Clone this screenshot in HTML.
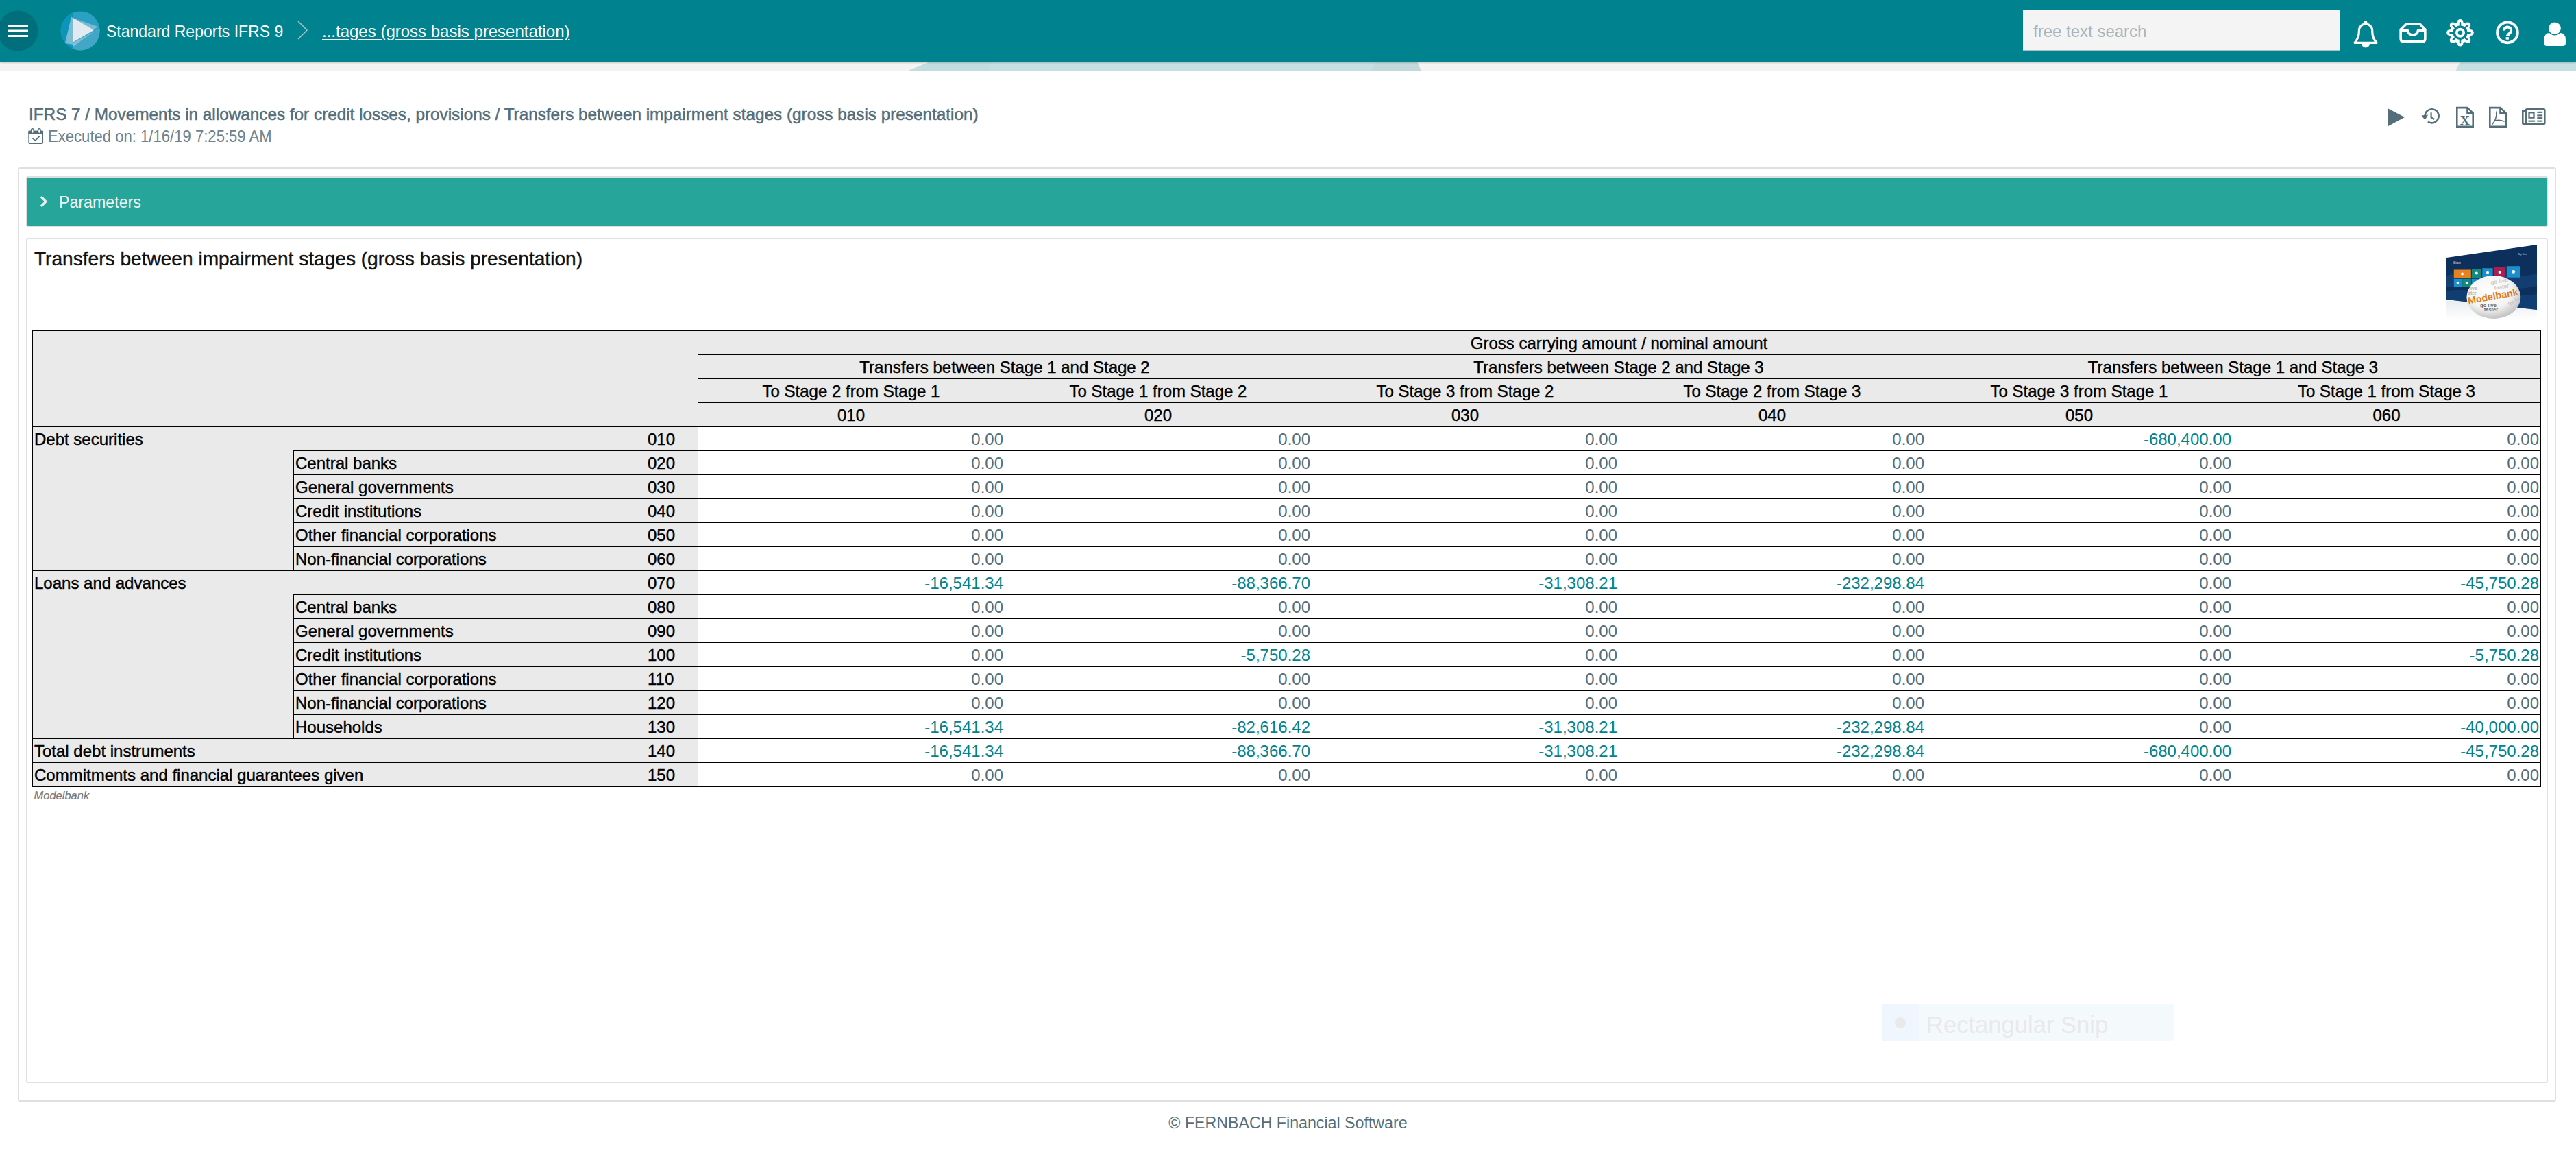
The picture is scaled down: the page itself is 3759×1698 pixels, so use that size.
<!DOCTYPE html>
<html><head><meta charset="utf-8"><title>Standard Reports IFRS 9</title>
<style>
html,body{margin:0;padding:0;width:3759px;height:1698px;overflow:hidden;background:#fff;position:relative}
body{font-family:"Liberation Sans", sans-serif}
.t{position:absolute;white-space:nowrap}
.c{position:absolute;box-sizing:border-box;border-left:1px solid #000;border-top:1px solid #000}
.nl{border-left:none}
</style></head><body>
<div style="position:absolute;left:0;top:90px;width:3759px;height:14px;background:#f3f3f3"></div><svg style="position:absolute;left:0;top:90px" width="3759" height="14">
<polygon points="1323,14 1358,0 2040,0 2074,14" fill="#c5dfe2"/>
<polygon points="1323,14 1358,0 1445,0 1445,14" fill="#c3dcdf"/>
<polygon points="2000,14 2008,0 2068,0 2074,14" fill="#c2d8da"/>
<polygon points="3583,14 3590,0 3759,0 3759,14" fill="#c5dfe2"/>
</svg><div style="position:absolute;left:0;top:0;width:3759px;height:90px;background:#00838f;box-shadow:0 1px 3px rgba(0,0,0,0.32)"></div><svg style="position:absolute;left:0;top:0" width="70" height="90">
<circle cx="26" cy="45" r="29.5" fill="#006f7b"/>
<rect x="11" y="36" width="30" height="3" fill="#fff"/>
<rect x="11" y="43.5" width="30" height="3" fill="#fff"/>
<rect x="11" y="51" width="30" height="3" fill="#fff"/>
</svg><svg style="position:absolute;left:80px;top:10px" width="70" height="70" viewBox="0 0 70 70">
<defs><clipPath id="lc"><circle cx="37.1" cy="34.9" r="28.5"/></clipPath></defs>
<g clip-path="url(#lc)">
<rect x="0" y="0" width="70" height="70" fill="#2aa0c3"/>
<polygon points="0,0 26.8,0 26.8,70 0,70" fill="#0b95bb"/>
<polygon points="26.8,52 70,28 70,70 26.8,70" fill="#42a6c6"/>
<polygon points="24,14.4 26.8,16.2 26.8,55 15,53" fill="#7cbcd3"/>
<polygon points="26.8,16.2 63.1,28.9 57,33 37,28" fill="#79b9d1"/>
<polygon points="26.8,52.3 57,36 40,48 26.8,58" fill="#86bfd4"/>
</g>
<polygon points="26.8,16.2 57.1,34 26.8,51.4" fill="#e1eaf0"/>
</svg><div class="t" style="left:155px;top:34.83px;font-size:23px;line-height:23px;color:#fff;font-weight:normal;">Standard Reports IFRS 9</div>
<svg style="position:absolute;left:433px;top:30px" width="18" height="28"><polyline points="2,1 15,14 2,27" fill="none" stroke="#a9c4c8" stroke-width="1.5"/></svg><div class="t" style="left:470px;top:33.98px;font-size:24px;line-height:24px;color:#fff;font-weight:normal;text-decoration:underline;text-underline-offset:3px;text-decoration-thickness:2px;">...tages (gross basis presentation)</div>
<div style="position:absolute;left:2952px;top:15px;width:463px;height:58px;background:#f4f4f4;border-bottom:2px solid #b0bec5"></div><div class="t" style="left:2967px;top:33.68px;font-size:24px;line-height:24px;color:#aab4ba;font-weight:normal;">free text search</div>
<svg style="position:absolute;left:3425px;top:20px" width="334" height="60" viewBox="0 0 334 60">
<g fill="none" stroke="#fff" stroke-width="3.2" stroke-linejoin="round">
<path d="M11,42.3 L43.1,42.3 C38.5,37.5 36.75,32 36.75,26 L36.75,24.7 A9.7,9.7 0 0 0 17.35,24.7 L17.35,26 C17.35,32 15.5,37.5 11,42.3 Z"/>
<path d="M86.5,14.85 L105.8,14.85 L113.85,23 L113.85,36.7 Q113.85,40.7 109.85,40.7 L82.15,40.7 Q78.15,40.7 78.15,36.7 L78.15,23 Z" stroke-width="3.6"/>
<path d="M78.15,24.5 L88.4,24.5 A7.5,6.5 0 0 0 103.4,24.5 L113.85,24.5" stroke-width="3.6"/>
<circle cx="233.95" cy="27.4" r="14.9" stroke-width="3.8"/>
<path d="M229.1,24.6 A5,5 0 1 1 237.6,28 L235,30.6 Q233.8,31.7 233.8,33" stroke-width="4" stroke-linejoin="miter"/>
</g>
<circle cx="27" cy="12.2" r="2.3" fill="#fff"/>
<path d="M21.2,43.5 A5.9,5.9 0 0 0 33,43.5 Z" fill="#fff"/>
<rect x="231.7" y="34.1" width="4.2" height="3.6" fill="#fff"/>
<circle cx="165" cy="27.7" r="15.2" fill="#fff"/>
<circle cx="165.00" cy="12.30" r="4.4" fill="#fff"/><circle cx="175.89" cy="16.81" r="4.4" fill="#fff"/><circle cx="180.40" cy="27.70" r="4.4" fill="#fff"/><circle cx="175.89" cy="38.59" r="4.4" fill="#fff"/><circle cx="165.00" cy="43.10" r="4.4" fill="#fff"/><circle cx="154.11" cy="38.59" r="4.4" fill="#fff"/><circle cx="149.60" cy="27.70" r="4.4" fill="#fff"/><circle cx="154.11" cy="16.81" r="4.4" fill="#fff"/>
<circle cx="165" cy="27.7" r="10.5" fill="#00838f"/>
<rect x="163.75" y="11.90" width="2.5" height="7" rx="1.25" fill="#00838f" transform="rotate(0 165 27.7)"/><rect x="163.75" y="11.90" width="2.5" height="7" rx="1.25" fill="#00838f" transform="rotate(45 165 27.7)"/><rect x="163.75" y="11.90" width="2.5" height="7" rx="1.25" fill="#00838f" transform="rotate(90 165 27.7)"/><rect x="163.75" y="11.90" width="2.5" height="7" rx="1.25" fill="#00838f" transform="rotate(135 165 27.7)"/><rect x="163.75" y="11.90" width="2.5" height="7" rx="1.25" fill="#00838f" transform="rotate(180 165 27.7)"/><rect x="163.75" y="11.90" width="2.5" height="7" rx="1.25" fill="#00838f" transform="rotate(225 165 27.7)"/><rect x="163.75" y="11.90" width="2.5" height="7" rx="1.25" fill="#00838f" transform="rotate(270 165 27.7)"/><rect x="163.75" y="11.90" width="2.5" height="7" rx="1.25" fill="#00838f" transform="rotate(315 165 27.7)"/>
<circle cx="165" cy="27.7" r="5.15" fill="none" stroke="#fff" stroke-width="3.7"/>
<path d="M287.4,43 L287.4,38 Q287.4,28.1 296,28.1 L310.3,28.1 Q318.9,28.1 318.9,38 L318.9,43 Q318.9,47.1 314.8,47.1 L291.5,47.1 Q287.4,47.1 287.4,43 Z" fill="#fff"/>
<circle cx="303" cy="21.3" r="10.3" fill="#00838f"/>
<circle cx="303" cy="21.3" r="8.8" fill="#fff"/>
</svg><div class="t" style="left:42px;top:154.73px;font-size:24.3px;line-height:24.3px;color:#546e7a;font-weight:normal;-webkit-text-stroke:0.55px #546e7a;">IFRS 7 / Movements in allowances for credit losses, provisions / Transfers between impairment stages (gross basis presentation)</div>
<svg style="position:absolute;left:36px;top:182px" width="34" height="34" viewBox="0 0 34 34">
<rect x="6.2" y="9.5" width="20" height="17.7" rx="1.2" fill="none" stroke="#546e7a" stroke-width="1.7"/>
<rect x="5.4" y="8.7" width="21.6" height="4.7" fill="#546e7a"/>
<rect x="9.6" y="5.8" width="3.6" height="6.8" rx="1.8" fill="#fff" stroke="#546e7a" stroke-width="1.5"/>
<rect x="19.5" y="5.8" width="3.6" height="6.8" rx="1.8" fill="#fff" stroke="#546e7a" stroke-width="1.5"/>
<polyline points="11.5,19.6 15.4,23.1 21.7,16.7" fill="none" stroke="#546e7a" stroke-width="1.8"/>
</svg><div class="t" style="left:70px;top:188.31px;font-size:23.5px;line-height:23.5px;color:#6d828c;font-weight:normal;transform:scaleX(0.94);transform-origin:0 0;">Executed on: 1/16/19 7:25:59 AM</div>
<svg style="position:absolute;left:3480px;top:150px" width="240" height="40" viewBox="0 0 240 40">
<polygon points="5,8.4 29,21 5,34.1" fill="#546e7a"/>
<g fill="none" stroke="#546e7a" stroke-width="2.6">
<path d="M58.6,19.3 A10,10 0 1 1 62.9,27.5"/>
<polyline points="67.6,14.3 67.6,21.2 72.1,24" stroke-width="2.2"/>
<path d="M105.3,7.1 L120.5,7.1 L128.7,15 L128.7,34.7 L105.3,34.7 Z"/>
<polyline points="120.5,7.1 120.5,15 128.7,15"/>
<path d="M153.3,7.1 L168.5,7.1 L176.7,15 L176.7,34.7 L153.3,34.7 Z"/>
<polyline points="168.5,7.1 168.5,15 176.7,15"/>
<rect x="206" y="9.3" width="27.3" height="21.7" rx="1.5"/>
<path d="M206,11.8 L201.3,11.8 L201.3,29.5 Q201.3,31 202.8,31 L206,31"/>
<rect x="210.5" y="14.3" width="7" height="7.3" stroke-width="2.3"/>
</g>
<polygon points="53.4,18.6 63.2,17.6 58.6,25" fill="#546e7a"/>
<text x="116.9" y="32.2" font-family="Liberation Serif" font-weight="bold" font-size="19.5" fill="#546e7a" text-anchor="middle">X</text>
<path d="M156.8,31.5 C160,28 163.5,21 162.8,12.5 M159.5,26.5 C163,25 170,24.5 174.5,27.5 M160.5,26 C162.5,21 164,17 162.8,12.5" fill="none" stroke="#546e7a" stroke-width="1.5"/>
<rect x="222.3" y="12.8" width="7.9" height="2.1" fill="#546e7a"/><rect x="222.3" y="17.3" width="7.9" height="2.1" fill="#546e7a"/>
<rect x="222.3" y="21.1" width="7.9" height="2.1" fill="#546e7a"/>
<rect x="209.4" y="25.6" width="9.7" height="2.1" fill="#546e7a"/><rect x="222.3" y="25.6" width="7.9" height="2.1" fill="#546e7a"/>
</svg><div style="position:absolute;left:26px;top:244px;width:3700px;height:1359px;border:2px solid #e0e0e0;border-radius:3px"></div><div style="position:absolute;left:38px;top:257px;width:3676px;height:70px;border:2px solid #dedede;border-radius:3px;background:#26a69a"></div><svg style="position:absolute;left:56px;top:284px" width="16" height="20"><polyline points="4,3 11,10 4,17" fill="none" stroke="#eceff1" stroke-width="3.2"/></svg><div class="t" style="left:86px;top:284.36px;font-size:23.2px;line-height:23.2px;color:#eef3f3;font-weight:normal;">Parameters</div>
<div style="position:absolute;left:38px;top:347px;width:3676px;height:1229px;border:2px solid #e0e0e0;border-radius:3px"></div><div class="t" style="left:50px;top:364.21px;font-size:28.1px;line-height:28.1px;color:#111;font-weight:normal;-webkit-text-stroke:0.45px #111;">Transfers between impairment stages (gross basis presentation)</div>
<div style="position:absolute;left:0;top:0"><div class="c" style="left:47px;top:482px;width:971px;height:140px;background:#eaeaea"></div>
<div class="c" style="left:1018px;top:482px;width:2689px;height:35px;background:#eaeaea"></div>
<div class="c" style="left:1018px;top:517px;width:896px;height:35px;background:#eaeaea"></div>
<div class="c" style="left:1914px;top:517px;width:896px;height:35px;background:#eaeaea"></div>
<div class="c" style="left:2810px;top:517px;width:897px;height:35px;background:#eaeaea"></div>
<div class="c" style="left:1018px;top:552px;width:448px;height:35px;background:#eaeaea"></div>
<div class="c" style="left:1018px;top:587px;width:448px;height:35px;background:#eaeaea"></div>
<div class="c" style="left:1466px;top:552px;width:448px;height:35px;background:#eaeaea"></div>
<div class="c" style="left:1466px;top:587px;width:448px;height:35px;background:#eaeaea"></div>
<div class="c" style="left:1914px;top:552px;width:448px;height:35px;background:#eaeaea"></div>
<div class="c" style="left:1914px;top:587px;width:448px;height:35px;background:#eaeaea"></div>
<div class="c" style="left:2362px;top:552px;width:448px;height:35px;background:#eaeaea"></div>
<div class="c" style="left:2362px;top:587px;width:448px;height:35px;background:#eaeaea"></div>
<div class="c" style="left:2810px;top:552px;width:448px;height:35px;background:#eaeaea"></div>
<div class="c" style="left:2810px;top:587px;width:448px;height:35px;background:#eaeaea"></div>
<div class="c" style="left:3258px;top:552px;width:449px;height:35px;background:#eaeaea"></div>
<div class="c" style="left:3258px;top:587px;width:449px;height:35px;background:#eaeaea"></div>
<div class="c" style="left:47px;top:622px;width:381px;height:210px;background:#eaeaea"></div>
<div class="c" style="left:47px;top:832px;width:381px;height:245px;background:#eaeaea"></div>
<div class="c nl" style="left:428px;top:622px;width:514px;height:35px;background:#eaeaea"></div>
<div class="c" style="left:942px;top:622px;width:76px;height:35px;background:#eaeaea"></div>
<div class="c" style="left:1018px;top:622px;width:448px;height:35px;background:#fff"></div>
<div class="c" style="left:1466px;top:622px;width:448px;height:35px;background:#fff"></div>
<div class="c" style="left:1914px;top:622px;width:448px;height:35px;background:#fff"></div>
<div class="c" style="left:2362px;top:622px;width:448px;height:35px;background:#fff"></div>
<div class="c" style="left:2810px;top:622px;width:448px;height:35px;background:#fff"></div>
<div class="c" style="left:3258px;top:622px;width:449px;height:35px;background:#fff"></div>
<div class="c" style="left:428px;top:657px;width:514px;height:35px;background:#eaeaea"></div>
<div class="c" style="left:942px;top:657px;width:76px;height:35px;background:#eaeaea"></div>
<div class="c" style="left:1018px;top:657px;width:448px;height:35px;background:#fff"></div>
<div class="c" style="left:1466px;top:657px;width:448px;height:35px;background:#fff"></div>
<div class="c" style="left:1914px;top:657px;width:448px;height:35px;background:#fff"></div>
<div class="c" style="left:2362px;top:657px;width:448px;height:35px;background:#fff"></div>
<div class="c" style="left:2810px;top:657px;width:448px;height:35px;background:#fff"></div>
<div class="c" style="left:3258px;top:657px;width:449px;height:35px;background:#fff"></div>
<div class="c" style="left:428px;top:692px;width:514px;height:35px;background:#eaeaea"></div>
<div class="c" style="left:942px;top:692px;width:76px;height:35px;background:#eaeaea"></div>
<div class="c" style="left:1018px;top:692px;width:448px;height:35px;background:#fff"></div>
<div class="c" style="left:1466px;top:692px;width:448px;height:35px;background:#fff"></div>
<div class="c" style="left:1914px;top:692px;width:448px;height:35px;background:#fff"></div>
<div class="c" style="left:2362px;top:692px;width:448px;height:35px;background:#fff"></div>
<div class="c" style="left:2810px;top:692px;width:448px;height:35px;background:#fff"></div>
<div class="c" style="left:3258px;top:692px;width:449px;height:35px;background:#fff"></div>
<div class="c" style="left:428px;top:727px;width:514px;height:35px;background:#eaeaea"></div>
<div class="c" style="left:942px;top:727px;width:76px;height:35px;background:#eaeaea"></div>
<div class="c" style="left:1018px;top:727px;width:448px;height:35px;background:#fff"></div>
<div class="c" style="left:1466px;top:727px;width:448px;height:35px;background:#fff"></div>
<div class="c" style="left:1914px;top:727px;width:448px;height:35px;background:#fff"></div>
<div class="c" style="left:2362px;top:727px;width:448px;height:35px;background:#fff"></div>
<div class="c" style="left:2810px;top:727px;width:448px;height:35px;background:#fff"></div>
<div class="c" style="left:3258px;top:727px;width:449px;height:35px;background:#fff"></div>
<div class="c" style="left:428px;top:762px;width:514px;height:35px;background:#eaeaea"></div>
<div class="c" style="left:942px;top:762px;width:76px;height:35px;background:#eaeaea"></div>
<div class="c" style="left:1018px;top:762px;width:448px;height:35px;background:#fff"></div>
<div class="c" style="left:1466px;top:762px;width:448px;height:35px;background:#fff"></div>
<div class="c" style="left:1914px;top:762px;width:448px;height:35px;background:#fff"></div>
<div class="c" style="left:2362px;top:762px;width:448px;height:35px;background:#fff"></div>
<div class="c" style="left:2810px;top:762px;width:448px;height:35px;background:#fff"></div>
<div class="c" style="left:3258px;top:762px;width:449px;height:35px;background:#fff"></div>
<div class="c" style="left:428px;top:797px;width:514px;height:35px;background:#eaeaea"></div>
<div class="c" style="left:942px;top:797px;width:76px;height:35px;background:#eaeaea"></div>
<div class="c" style="left:1018px;top:797px;width:448px;height:35px;background:#fff"></div>
<div class="c" style="left:1466px;top:797px;width:448px;height:35px;background:#fff"></div>
<div class="c" style="left:1914px;top:797px;width:448px;height:35px;background:#fff"></div>
<div class="c" style="left:2362px;top:797px;width:448px;height:35px;background:#fff"></div>
<div class="c" style="left:2810px;top:797px;width:448px;height:35px;background:#fff"></div>
<div class="c" style="left:3258px;top:797px;width:449px;height:35px;background:#fff"></div>
<div class="c nl" style="left:428px;top:832px;width:514px;height:35px;background:#eaeaea"></div>
<div class="c" style="left:942px;top:832px;width:76px;height:35px;background:#eaeaea"></div>
<div class="c" style="left:1018px;top:832px;width:448px;height:35px;background:#fff"></div>
<div class="c" style="left:1466px;top:832px;width:448px;height:35px;background:#fff"></div>
<div class="c" style="left:1914px;top:832px;width:448px;height:35px;background:#fff"></div>
<div class="c" style="left:2362px;top:832px;width:448px;height:35px;background:#fff"></div>
<div class="c" style="left:2810px;top:832px;width:448px;height:35px;background:#fff"></div>
<div class="c" style="left:3258px;top:832px;width:449px;height:35px;background:#fff"></div>
<div class="c" style="left:428px;top:867px;width:514px;height:35px;background:#eaeaea"></div>
<div class="c" style="left:942px;top:867px;width:76px;height:35px;background:#eaeaea"></div>
<div class="c" style="left:1018px;top:867px;width:448px;height:35px;background:#fff"></div>
<div class="c" style="left:1466px;top:867px;width:448px;height:35px;background:#fff"></div>
<div class="c" style="left:1914px;top:867px;width:448px;height:35px;background:#fff"></div>
<div class="c" style="left:2362px;top:867px;width:448px;height:35px;background:#fff"></div>
<div class="c" style="left:2810px;top:867px;width:448px;height:35px;background:#fff"></div>
<div class="c" style="left:3258px;top:867px;width:449px;height:35px;background:#fff"></div>
<div class="c" style="left:428px;top:902px;width:514px;height:35px;background:#eaeaea"></div>
<div class="c" style="left:942px;top:902px;width:76px;height:35px;background:#eaeaea"></div>
<div class="c" style="left:1018px;top:902px;width:448px;height:35px;background:#fff"></div>
<div class="c" style="left:1466px;top:902px;width:448px;height:35px;background:#fff"></div>
<div class="c" style="left:1914px;top:902px;width:448px;height:35px;background:#fff"></div>
<div class="c" style="left:2362px;top:902px;width:448px;height:35px;background:#fff"></div>
<div class="c" style="left:2810px;top:902px;width:448px;height:35px;background:#fff"></div>
<div class="c" style="left:3258px;top:902px;width:449px;height:35px;background:#fff"></div>
<div class="c" style="left:428px;top:937px;width:514px;height:35px;background:#eaeaea"></div>
<div class="c" style="left:942px;top:937px;width:76px;height:35px;background:#eaeaea"></div>
<div class="c" style="left:1018px;top:937px;width:448px;height:35px;background:#fff"></div>
<div class="c" style="left:1466px;top:937px;width:448px;height:35px;background:#fff"></div>
<div class="c" style="left:1914px;top:937px;width:448px;height:35px;background:#fff"></div>
<div class="c" style="left:2362px;top:937px;width:448px;height:35px;background:#fff"></div>
<div class="c" style="left:2810px;top:937px;width:448px;height:35px;background:#fff"></div>
<div class="c" style="left:3258px;top:937px;width:449px;height:35px;background:#fff"></div>
<div class="c" style="left:428px;top:972px;width:514px;height:35px;background:#eaeaea"></div>
<div class="c" style="left:942px;top:972px;width:76px;height:35px;background:#eaeaea"></div>
<div class="c" style="left:1018px;top:972px;width:448px;height:35px;background:#fff"></div>
<div class="c" style="left:1466px;top:972px;width:448px;height:35px;background:#fff"></div>
<div class="c" style="left:1914px;top:972px;width:448px;height:35px;background:#fff"></div>
<div class="c" style="left:2362px;top:972px;width:448px;height:35px;background:#fff"></div>
<div class="c" style="left:2810px;top:972px;width:448px;height:35px;background:#fff"></div>
<div class="c" style="left:3258px;top:972px;width:449px;height:35px;background:#fff"></div>
<div class="c" style="left:428px;top:1007px;width:514px;height:35px;background:#eaeaea"></div>
<div class="c" style="left:942px;top:1007px;width:76px;height:35px;background:#eaeaea"></div>
<div class="c" style="left:1018px;top:1007px;width:448px;height:35px;background:#fff"></div>
<div class="c" style="left:1466px;top:1007px;width:448px;height:35px;background:#fff"></div>
<div class="c" style="left:1914px;top:1007px;width:448px;height:35px;background:#fff"></div>
<div class="c" style="left:2362px;top:1007px;width:448px;height:35px;background:#fff"></div>
<div class="c" style="left:2810px;top:1007px;width:448px;height:35px;background:#fff"></div>
<div class="c" style="left:3258px;top:1007px;width:449px;height:35px;background:#fff"></div>
<div class="c" style="left:428px;top:1042px;width:514px;height:35px;background:#eaeaea"></div>
<div class="c" style="left:942px;top:1042px;width:76px;height:35px;background:#eaeaea"></div>
<div class="c" style="left:1018px;top:1042px;width:448px;height:35px;background:#fff"></div>
<div class="c" style="left:1466px;top:1042px;width:448px;height:35px;background:#fff"></div>
<div class="c" style="left:1914px;top:1042px;width:448px;height:35px;background:#fff"></div>
<div class="c" style="left:2362px;top:1042px;width:448px;height:35px;background:#fff"></div>
<div class="c" style="left:2810px;top:1042px;width:448px;height:35px;background:#fff"></div>
<div class="c" style="left:3258px;top:1042px;width:449px;height:35px;background:#fff"></div>
<div class="c" style="left:47px;top:1077px;width:895px;height:35px;background:#eaeaea"></div>
<div class="c" style="left:942px;top:1077px;width:76px;height:35px;background:#eaeaea"></div>
<div class="c" style="left:1018px;top:1077px;width:448px;height:35px;background:#fff"></div>
<div class="c" style="left:1466px;top:1077px;width:448px;height:35px;background:#fff"></div>
<div class="c" style="left:1914px;top:1077px;width:448px;height:35px;background:#fff"></div>
<div class="c" style="left:2362px;top:1077px;width:448px;height:35px;background:#fff"></div>
<div class="c" style="left:2810px;top:1077px;width:448px;height:35px;background:#fff"></div>
<div class="c" style="left:3258px;top:1077px;width:449px;height:35px;background:#fff"></div>
<div class="c" style="left:47px;top:1112px;width:895px;height:35px;background:#eaeaea"></div>
<div class="c" style="left:942px;top:1112px;width:76px;height:35px;background:#eaeaea"></div>
<div class="c" style="left:1018px;top:1112px;width:448px;height:35px;background:#fff"></div>
<div class="c" style="left:1466px;top:1112px;width:448px;height:35px;background:#fff"></div>
<div class="c" style="left:1914px;top:1112px;width:448px;height:35px;background:#fff"></div>
<div class="c" style="left:2362px;top:1112px;width:448px;height:35px;background:#fff"></div>
<div class="c" style="left:2810px;top:1112px;width:448px;height:35px;background:#fff"></div>
<div class="c" style="left:3258px;top:1112px;width:449px;height:35px;background:#fff"></div>
</div><div style="position:absolute;left:47px;top:482px;width:3660px;height:665px;border-right:1px solid #000;border-bottom:1px solid #000"></div><div class="t" style="left:1362.5px;width:2000px;text-align:center;top:488.98px;font-size:24px;line-height:24px;color:#000;font-weight:normal;-webkit-text-stroke:0.45px #000;">Gross carrying amount / nominal amount</div>
<div class="t" style="left:466.0px;width:2000px;text-align:center;top:523.98px;font-size:24px;line-height:24px;color:#000;font-weight:normal;-webkit-text-stroke:0.45px #000;">Transfers between Stage 1 and Stage 2</div>
<div class="t" style="left:1362.0px;width:2000px;text-align:center;top:523.98px;font-size:24px;line-height:24px;color:#000;font-weight:normal;-webkit-text-stroke:0.45px #000;">Transfers between Stage 2 and Stage 3</div>
<div class="t" style="left:2258.5px;width:2000px;text-align:center;top:523.98px;font-size:24px;line-height:24px;color:#000;font-weight:normal;-webkit-text-stroke:0.45px #000;">Transfers between Stage 1 and Stage 3</div>
<div class="t" style="left:242.0px;width:2000px;text-align:center;top:558.98px;font-size:24px;line-height:24px;color:#000;font-weight:normal;-webkit-text-stroke:0.45px #000;">To Stage 2 from Stage 1</div>
<div class="t" style="left:242.0px;width:2000px;text-align:center;top:593.98px;font-size:24px;line-height:24px;color:#000;font-weight:normal;-webkit-text-stroke:0.45px #000;">010</div>
<div class="t" style="left:690.0px;width:2000px;text-align:center;top:558.98px;font-size:24px;line-height:24px;color:#000;font-weight:normal;-webkit-text-stroke:0.45px #000;">To Stage 1 from Stage 2</div>
<div class="t" style="left:690.0px;width:2000px;text-align:center;top:593.98px;font-size:24px;line-height:24px;color:#000;font-weight:normal;-webkit-text-stroke:0.45px #000;">020</div>
<div class="t" style="left:1138.0px;width:2000px;text-align:center;top:558.98px;font-size:24px;line-height:24px;color:#000;font-weight:normal;-webkit-text-stroke:0.45px #000;">To Stage 3 from Stage 2</div>
<div class="t" style="left:1138.0px;width:2000px;text-align:center;top:593.98px;font-size:24px;line-height:24px;color:#000;font-weight:normal;-webkit-text-stroke:0.45px #000;">030</div>
<div class="t" style="left:1586.0px;width:2000px;text-align:center;top:558.98px;font-size:24px;line-height:24px;color:#000;font-weight:normal;-webkit-text-stroke:0.45px #000;">To Stage 2 from Stage 3</div>
<div class="t" style="left:1586.0px;width:2000px;text-align:center;top:593.98px;font-size:24px;line-height:24px;color:#000;font-weight:normal;-webkit-text-stroke:0.45px #000;">040</div>
<div class="t" style="left:2034.0px;width:2000px;text-align:center;top:558.98px;font-size:24px;line-height:24px;color:#000;font-weight:normal;-webkit-text-stroke:0.45px #000;">To Stage 3 from Stage 1</div>
<div class="t" style="left:2034.0px;width:2000px;text-align:center;top:593.98px;font-size:24px;line-height:24px;color:#000;font-weight:normal;-webkit-text-stroke:0.45px #000;">050</div>
<div class="t" style="left:2482.5px;width:2000px;text-align:center;top:558.98px;font-size:24px;line-height:24px;color:#000;font-weight:normal;-webkit-text-stroke:0.45px #000;">To Stage 1 from Stage 3</div>
<div class="t" style="left:2482.5px;width:2000px;text-align:center;top:593.98px;font-size:24px;line-height:24px;color:#000;font-weight:normal;-webkit-text-stroke:0.45px #000;">060</div>
<div class="t" style="left:50px;top:628.98px;font-size:24px;line-height:24px;color:#000;font-weight:normal;-webkit-text-stroke:0.45px #000;">Debt securities</div>
<div class="t" style="left:945px;top:628.98px;font-size:24px;line-height:24px;color:#000;font-weight:normal;-webkit-text-stroke:0.45px #000;">010</div>
<div class="t" style="right:2295px;top:628.98px;font-size:24px;line-height:24px;color:#546e7a;font-weight:normal;">0.00</div>
<div class="t" style="right:1847px;top:628.98px;font-size:24px;line-height:24px;color:#546e7a;font-weight:normal;">0.00</div>
<div class="t" style="right:1399px;top:628.98px;font-size:24px;line-height:24px;color:#546e7a;font-weight:normal;">0.00</div>
<div class="t" style="right:951px;top:628.98px;font-size:24px;line-height:24px;color:#546e7a;font-weight:normal;">0.00</div>
<div class="t" style="right:503px;top:628.98px;font-size:24px;line-height:24px;color:#00838f;font-weight:normal;">-680,400.00</div>
<div class="t" style="right:54px;top:628.98px;font-size:24px;line-height:24px;color:#546e7a;font-weight:normal;">0.00</div>
<div class="t" style="left:431px;top:663.98px;font-size:24px;line-height:24px;color:#000;font-weight:normal;-webkit-text-stroke:0.45px #000;">Central banks</div>
<div class="t" style="left:945px;top:663.98px;font-size:24px;line-height:24px;color:#000;font-weight:normal;-webkit-text-stroke:0.45px #000;">020</div>
<div class="t" style="right:2295px;top:663.98px;font-size:24px;line-height:24px;color:#546e7a;font-weight:normal;">0.00</div>
<div class="t" style="right:1847px;top:663.98px;font-size:24px;line-height:24px;color:#546e7a;font-weight:normal;">0.00</div>
<div class="t" style="right:1399px;top:663.98px;font-size:24px;line-height:24px;color:#546e7a;font-weight:normal;">0.00</div>
<div class="t" style="right:951px;top:663.98px;font-size:24px;line-height:24px;color:#546e7a;font-weight:normal;">0.00</div>
<div class="t" style="right:503px;top:663.98px;font-size:24px;line-height:24px;color:#546e7a;font-weight:normal;">0.00</div>
<div class="t" style="right:54px;top:663.98px;font-size:24px;line-height:24px;color:#546e7a;font-weight:normal;">0.00</div>
<div class="t" style="left:431px;top:698.98px;font-size:24px;line-height:24px;color:#000;font-weight:normal;-webkit-text-stroke:0.45px #000;">General governments</div>
<div class="t" style="left:945px;top:698.98px;font-size:24px;line-height:24px;color:#000;font-weight:normal;-webkit-text-stroke:0.45px #000;">030</div>
<div class="t" style="right:2295px;top:698.98px;font-size:24px;line-height:24px;color:#546e7a;font-weight:normal;">0.00</div>
<div class="t" style="right:1847px;top:698.98px;font-size:24px;line-height:24px;color:#546e7a;font-weight:normal;">0.00</div>
<div class="t" style="right:1399px;top:698.98px;font-size:24px;line-height:24px;color:#546e7a;font-weight:normal;">0.00</div>
<div class="t" style="right:951px;top:698.98px;font-size:24px;line-height:24px;color:#546e7a;font-weight:normal;">0.00</div>
<div class="t" style="right:503px;top:698.98px;font-size:24px;line-height:24px;color:#546e7a;font-weight:normal;">0.00</div>
<div class="t" style="right:54px;top:698.98px;font-size:24px;line-height:24px;color:#546e7a;font-weight:normal;">0.00</div>
<div class="t" style="left:431px;top:733.98px;font-size:24px;line-height:24px;color:#000;font-weight:normal;-webkit-text-stroke:0.45px #000;">Credit institutions</div>
<div class="t" style="left:945px;top:733.98px;font-size:24px;line-height:24px;color:#000;font-weight:normal;-webkit-text-stroke:0.45px #000;">040</div>
<div class="t" style="right:2295px;top:733.98px;font-size:24px;line-height:24px;color:#546e7a;font-weight:normal;">0.00</div>
<div class="t" style="right:1847px;top:733.98px;font-size:24px;line-height:24px;color:#546e7a;font-weight:normal;">0.00</div>
<div class="t" style="right:1399px;top:733.98px;font-size:24px;line-height:24px;color:#546e7a;font-weight:normal;">0.00</div>
<div class="t" style="right:951px;top:733.98px;font-size:24px;line-height:24px;color:#546e7a;font-weight:normal;">0.00</div>
<div class="t" style="right:503px;top:733.98px;font-size:24px;line-height:24px;color:#546e7a;font-weight:normal;">0.00</div>
<div class="t" style="right:54px;top:733.98px;font-size:24px;line-height:24px;color:#546e7a;font-weight:normal;">0.00</div>
<div class="t" style="left:431px;top:768.98px;font-size:24px;line-height:24px;color:#000;font-weight:normal;-webkit-text-stroke:0.45px #000;">Other financial corporations</div>
<div class="t" style="left:945px;top:768.98px;font-size:24px;line-height:24px;color:#000;font-weight:normal;-webkit-text-stroke:0.45px #000;">050</div>
<div class="t" style="right:2295px;top:768.98px;font-size:24px;line-height:24px;color:#546e7a;font-weight:normal;">0.00</div>
<div class="t" style="right:1847px;top:768.98px;font-size:24px;line-height:24px;color:#546e7a;font-weight:normal;">0.00</div>
<div class="t" style="right:1399px;top:768.98px;font-size:24px;line-height:24px;color:#546e7a;font-weight:normal;">0.00</div>
<div class="t" style="right:951px;top:768.98px;font-size:24px;line-height:24px;color:#546e7a;font-weight:normal;">0.00</div>
<div class="t" style="right:503px;top:768.98px;font-size:24px;line-height:24px;color:#546e7a;font-weight:normal;">0.00</div>
<div class="t" style="right:54px;top:768.98px;font-size:24px;line-height:24px;color:#546e7a;font-weight:normal;">0.00</div>
<div class="t" style="left:431px;top:803.98px;font-size:24px;line-height:24px;color:#000;font-weight:normal;-webkit-text-stroke:0.45px #000;">Non-financial corporations</div>
<div class="t" style="left:945px;top:803.98px;font-size:24px;line-height:24px;color:#000;font-weight:normal;-webkit-text-stroke:0.45px #000;">060</div>
<div class="t" style="right:2295px;top:803.98px;font-size:24px;line-height:24px;color:#546e7a;font-weight:normal;">0.00</div>
<div class="t" style="right:1847px;top:803.98px;font-size:24px;line-height:24px;color:#546e7a;font-weight:normal;">0.00</div>
<div class="t" style="right:1399px;top:803.98px;font-size:24px;line-height:24px;color:#546e7a;font-weight:normal;">0.00</div>
<div class="t" style="right:951px;top:803.98px;font-size:24px;line-height:24px;color:#546e7a;font-weight:normal;">0.00</div>
<div class="t" style="right:503px;top:803.98px;font-size:24px;line-height:24px;color:#546e7a;font-weight:normal;">0.00</div>
<div class="t" style="right:54px;top:803.98px;font-size:24px;line-height:24px;color:#546e7a;font-weight:normal;">0.00</div>
<div class="t" style="left:50px;top:838.98px;font-size:24px;line-height:24px;color:#000;font-weight:normal;-webkit-text-stroke:0.45px #000;">Loans and advances</div>
<div class="t" style="left:945px;top:838.98px;font-size:24px;line-height:24px;color:#000;font-weight:normal;-webkit-text-stroke:0.45px #000;">070</div>
<div class="t" style="right:2295px;top:838.98px;font-size:24px;line-height:24px;color:#00838f;font-weight:normal;">-16,541.34</div>
<div class="t" style="right:1847px;top:838.98px;font-size:24px;line-height:24px;color:#00838f;font-weight:normal;">-88,366.70</div>
<div class="t" style="right:1399px;top:838.98px;font-size:24px;line-height:24px;color:#00838f;font-weight:normal;">-31,308.21</div>
<div class="t" style="right:951px;top:838.98px;font-size:24px;line-height:24px;color:#00838f;font-weight:normal;">-232,298.84</div>
<div class="t" style="right:503px;top:838.98px;font-size:24px;line-height:24px;color:#546e7a;font-weight:normal;">0.00</div>
<div class="t" style="right:54px;top:838.98px;font-size:24px;line-height:24px;color:#00838f;font-weight:normal;">-45,750.28</div>
<div class="t" style="left:431px;top:873.98px;font-size:24px;line-height:24px;color:#000;font-weight:normal;-webkit-text-stroke:0.45px #000;">Central banks</div>
<div class="t" style="left:945px;top:873.98px;font-size:24px;line-height:24px;color:#000;font-weight:normal;-webkit-text-stroke:0.45px #000;">080</div>
<div class="t" style="right:2295px;top:873.98px;font-size:24px;line-height:24px;color:#546e7a;font-weight:normal;">0.00</div>
<div class="t" style="right:1847px;top:873.98px;font-size:24px;line-height:24px;color:#546e7a;font-weight:normal;">0.00</div>
<div class="t" style="right:1399px;top:873.98px;font-size:24px;line-height:24px;color:#546e7a;font-weight:normal;">0.00</div>
<div class="t" style="right:951px;top:873.98px;font-size:24px;line-height:24px;color:#546e7a;font-weight:normal;">0.00</div>
<div class="t" style="right:503px;top:873.98px;font-size:24px;line-height:24px;color:#546e7a;font-weight:normal;">0.00</div>
<div class="t" style="right:54px;top:873.98px;font-size:24px;line-height:24px;color:#546e7a;font-weight:normal;">0.00</div>
<div class="t" style="left:431px;top:908.98px;font-size:24px;line-height:24px;color:#000;font-weight:normal;-webkit-text-stroke:0.45px #000;">General governments</div>
<div class="t" style="left:945px;top:908.98px;font-size:24px;line-height:24px;color:#000;font-weight:normal;-webkit-text-stroke:0.45px #000;">090</div>
<div class="t" style="right:2295px;top:908.98px;font-size:24px;line-height:24px;color:#546e7a;font-weight:normal;">0.00</div>
<div class="t" style="right:1847px;top:908.98px;font-size:24px;line-height:24px;color:#546e7a;font-weight:normal;">0.00</div>
<div class="t" style="right:1399px;top:908.98px;font-size:24px;line-height:24px;color:#546e7a;font-weight:normal;">0.00</div>
<div class="t" style="right:951px;top:908.98px;font-size:24px;line-height:24px;color:#546e7a;font-weight:normal;">0.00</div>
<div class="t" style="right:503px;top:908.98px;font-size:24px;line-height:24px;color:#546e7a;font-weight:normal;">0.00</div>
<div class="t" style="right:54px;top:908.98px;font-size:24px;line-height:24px;color:#546e7a;font-weight:normal;">0.00</div>
<div class="t" style="left:431px;top:943.98px;font-size:24px;line-height:24px;color:#000;font-weight:normal;-webkit-text-stroke:0.45px #000;">Credit institutions</div>
<div class="t" style="left:945px;top:943.98px;font-size:24px;line-height:24px;color:#000;font-weight:normal;-webkit-text-stroke:0.45px #000;">100</div>
<div class="t" style="right:2295px;top:943.98px;font-size:24px;line-height:24px;color:#546e7a;font-weight:normal;">0.00</div>
<div class="t" style="right:1847px;top:943.98px;font-size:24px;line-height:24px;color:#00838f;font-weight:normal;">-5,750.28</div>
<div class="t" style="right:1399px;top:943.98px;font-size:24px;line-height:24px;color:#546e7a;font-weight:normal;">0.00</div>
<div class="t" style="right:951px;top:943.98px;font-size:24px;line-height:24px;color:#546e7a;font-weight:normal;">0.00</div>
<div class="t" style="right:503px;top:943.98px;font-size:24px;line-height:24px;color:#546e7a;font-weight:normal;">0.00</div>
<div class="t" style="right:54px;top:943.98px;font-size:24px;line-height:24px;color:#00838f;font-weight:normal;">-5,750.28</div>
<div class="t" style="left:431px;top:978.98px;font-size:24px;line-height:24px;color:#000;font-weight:normal;-webkit-text-stroke:0.45px #000;">Other financial corporations</div>
<div class="t" style="left:945px;top:978.98px;font-size:24px;line-height:24px;color:#000;font-weight:normal;-webkit-text-stroke:0.45px #000;">110</div>
<div class="t" style="right:2295px;top:978.98px;font-size:24px;line-height:24px;color:#546e7a;font-weight:normal;">0.00</div>
<div class="t" style="right:1847px;top:978.98px;font-size:24px;line-height:24px;color:#546e7a;font-weight:normal;">0.00</div>
<div class="t" style="right:1399px;top:978.98px;font-size:24px;line-height:24px;color:#546e7a;font-weight:normal;">0.00</div>
<div class="t" style="right:951px;top:978.98px;font-size:24px;line-height:24px;color:#546e7a;font-weight:normal;">0.00</div>
<div class="t" style="right:503px;top:978.98px;font-size:24px;line-height:24px;color:#546e7a;font-weight:normal;">0.00</div>
<div class="t" style="right:54px;top:978.98px;font-size:24px;line-height:24px;color:#546e7a;font-weight:normal;">0.00</div>
<div class="t" style="left:431px;top:1013.98px;font-size:24px;line-height:24px;color:#000;font-weight:normal;-webkit-text-stroke:0.45px #000;">Non-financial corporations</div>
<div class="t" style="left:945px;top:1013.98px;font-size:24px;line-height:24px;color:#000;font-weight:normal;-webkit-text-stroke:0.45px #000;">120</div>
<div class="t" style="right:2295px;top:1013.98px;font-size:24px;line-height:24px;color:#546e7a;font-weight:normal;">0.00</div>
<div class="t" style="right:1847px;top:1013.98px;font-size:24px;line-height:24px;color:#546e7a;font-weight:normal;">0.00</div>
<div class="t" style="right:1399px;top:1013.98px;font-size:24px;line-height:24px;color:#546e7a;font-weight:normal;">0.00</div>
<div class="t" style="right:951px;top:1013.98px;font-size:24px;line-height:24px;color:#546e7a;font-weight:normal;">0.00</div>
<div class="t" style="right:503px;top:1013.98px;font-size:24px;line-height:24px;color:#546e7a;font-weight:normal;">0.00</div>
<div class="t" style="right:54px;top:1013.98px;font-size:24px;line-height:24px;color:#546e7a;font-weight:normal;">0.00</div>
<div class="t" style="left:431px;top:1048.98px;font-size:24px;line-height:24px;color:#000;font-weight:normal;-webkit-text-stroke:0.45px #000;">Households</div>
<div class="t" style="left:945px;top:1048.98px;font-size:24px;line-height:24px;color:#000;font-weight:normal;-webkit-text-stroke:0.45px #000;">130</div>
<div class="t" style="right:2295px;top:1048.98px;font-size:24px;line-height:24px;color:#00838f;font-weight:normal;">-16,541.34</div>
<div class="t" style="right:1847px;top:1048.98px;font-size:24px;line-height:24px;color:#00838f;font-weight:normal;">-82,616.42</div>
<div class="t" style="right:1399px;top:1048.98px;font-size:24px;line-height:24px;color:#00838f;font-weight:normal;">-31,308.21</div>
<div class="t" style="right:951px;top:1048.98px;font-size:24px;line-height:24px;color:#00838f;font-weight:normal;">-232,298.84</div>
<div class="t" style="right:503px;top:1048.98px;font-size:24px;line-height:24px;color:#546e7a;font-weight:normal;">0.00</div>
<div class="t" style="right:54px;top:1048.98px;font-size:24px;line-height:24px;color:#00838f;font-weight:normal;">-40,000.00</div>
<div class="t" style="left:50px;top:1083.98px;font-size:24px;line-height:24px;color:#000;font-weight:normal;-webkit-text-stroke:0.45px #000;">Total debt instruments</div>
<div class="t" style="left:945px;top:1083.98px;font-size:24px;line-height:24px;color:#000;font-weight:normal;-webkit-text-stroke:0.45px #000;">140</div>
<div class="t" style="right:2295px;top:1083.98px;font-size:24px;line-height:24px;color:#00838f;font-weight:normal;">-16,541.34</div>
<div class="t" style="right:1847px;top:1083.98px;font-size:24px;line-height:24px;color:#00838f;font-weight:normal;">-88,366.70</div>
<div class="t" style="right:1399px;top:1083.98px;font-size:24px;line-height:24px;color:#00838f;font-weight:normal;">-31,308.21</div>
<div class="t" style="right:951px;top:1083.98px;font-size:24px;line-height:24px;color:#00838f;font-weight:normal;">-232,298.84</div>
<div class="t" style="right:503px;top:1083.98px;font-size:24px;line-height:24px;color:#00838f;font-weight:normal;">-680,400.00</div>
<div class="t" style="right:54px;top:1083.98px;font-size:24px;line-height:24px;color:#00838f;font-weight:normal;">-45,750.28</div>
<div class="t" style="left:50px;top:1118.98px;font-size:24px;line-height:24px;color:#000;font-weight:normal;-webkit-text-stroke:0.45px #000;">Commitments and financial guarantees given</div>
<div class="t" style="left:945px;top:1118.98px;font-size:24px;line-height:24px;color:#000;font-weight:normal;-webkit-text-stroke:0.45px #000;">150</div>
<div class="t" style="right:2295px;top:1118.98px;font-size:24px;line-height:24px;color:#546e7a;font-weight:normal;">0.00</div>
<div class="t" style="right:1847px;top:1118.98px;font-size:24px;line-height:24px;color:#546e7a;font-weight:normal;">0.00</div>
<div class="t" style="right:1399px;top:1118.98px;font-size:24px;line-height:24px;color:#546e7a;font-weight:normal;">0.00</div>
<div class="t" style="right:951px;top:1118.98px;font-size:24px;line-height:24px;color:#546e7a;font-weight:normal;">0.00</div>
<div class="t" style="right:503px;top:1118.98px;font-size:24px;line-height:24px;color:#546e7a;font-weight:normal;">0.00</div>
<div class="t" style="right:54px;top:1118.98px;font-size:24px;line-height:24px;color:#546e7a;font-weight:normal;">0.00</div>
<div class="t" style="left:49.5px;top:1152.03px;font-size:16.5px;line-height:16.5px;color:#777;font-weight:normal;font-style:italic;-webkit-text-stroke:0.2px #777;">Modelbank</div>
<svg style="position:absolute;left:3565px;top:357px" width="139" height="114" viewBox="0 0 139 114">
<defs>
<linearGradient id="fl" x1="0" y1="0" x2="0" y2="1"><stop offset="0" stop-color="#e9edf0"/><stop offset="1" stop-color="#ffffff"/></linearGradient>
<clipPath id="bc"><ellipse cx="73.8" cy="76.5" rx="39" ry="31"/></clipPath>
<radialGradient id="ball" cx="0.42" cy="0.35" r="0.7"><stop offset="0" stop-color="#ffffff"/><stop offset="0.6" stop-color="#f3f3f3"/><stop offset="1" stop-color="#b9b9b9"/></radialGradient>
</defs>
<rect width="139" height="114" fill="#fff"/>
<rect x="5" y="82" width="132" height="28" fill="url(#fl)"/>
<polygon points="5,19 137,0 137,95 5,80" fill="#0c2f5c"/>
<path d="M5,45 C40,35 90,55 137,42 L137,60 C90,72 40,55 5,62 Z" fill="#15457a" opacity="0.7"/>
<path d="M5,68 C40,60 90,80 137,72 L137,95 L5,80 Z" fill="#164a80" opacity="0.6"/>
<text x="15" y="28" font-family="Liberation Sans" font-size="5" fill="#cfd8e3">Start</text>
<text x="110" y="15" font-family="Liberation Sans" font-size="3.5" fill="#cfd8e3">My User</text>
<rect x="15.8" y="36.5" width="25" height="12.3" fill="#e8821e"/>
<rect x="41.9" y="35.3" width="13.8" height="13" fill="#14897f"/>
<rect x="57.3" y="34.2" width="15.3" height="13.5" fill="#1b8fcc"/>
<rect x="73.8" y="32.8" width="17.6" height="14.4" fill="#a8204f"/>
<rect x="92.8" y="31.2" width="19.9" height="16.5" fill="#1b8fcc"/>
<rect x="15.8" y="49.9" width="11.2" height="11.7" fill="#1b8fcc"/>
<rect x="28.2" y="49.9" width="12.6" height="11.7" fill="#14897f"/>
<rect x="41.9" y="49.9" width="13" height="11.7" fill="#1b8fcc"/>
<circle cx="28" cy="42.5" r="2" fill="#fff"/><circle cx="48.8" cy="41.6" r="2" fill="#fff"/>
<circle cx="65" cy="40.8" r="2" fill="#fff"/><circle cx="82.6" cy="40" r="2" fill="#fff"/><circle cx="102.7" cy="39.4" r="2.4" fill="#fff"/>
<circle cx="21.4" cy="55.7" r="1.8" fill="#fff"/><circle cx="34.5" cy="55.7" r="1.8" fill="#fff"/>
<ellipse cx="73.8" cy="76.5" rx="39.4" ry="31.4" fill="url(#ball)"/>
<text x="70" y="58" font-family="Liberation Sans" font-weight="bold" font-size="8" fill="#c8c8c8" transform="rotate(-10 70 58)">go live</text>
<text x="75" y="66" font-family="Liberation Sans" font-weight="bold" font-size="8" fill="#c8c8c8" transform="rotate(-10 75 66)">faster</text>
<text x="73.5" y="80" font-family="Liberation Sans" font-weight="bold" font-size="14.2" fill="#e07a1f" text-anchor="middle" transform="rotate(-10 73.5 80)">Modelbank</text>
<text x="66" y="90.5" font-family="Liberation Sans" font-weight="bold" font-size="7.5" fill="#666" text-anchor="middle">go live</text>
<text x="70" y="97" font-family="Liberation Sans" font-weight="bold" font-size="7.5" fill="#666" text-anchor="middle">faster</text>
<g clip-path="url(#bc)"><text x="96" y="88" font-family="Liberation Sans" font-weight="bold" font-size="7" fill="#c4c4c4" transform="rotate(-25 96 88)">go live</text><text x="38" y="66" font-family="Liberation Sans" font-weight="bold" font-size="7" fill="#b8b8b8">live</text><text x="36" y="73" font-family="Liberation Sans" font-weight="bold" font-size="7" fill="#b8b8b8">ster</text></g>
</svg><div style="position:absolute;left:2746px;top:1465px;width:427px;height:54px;background:#f4f9fc"></div><div style="position:absolute;left:2746px;top:1465px;width:54px;height:54px;background:#eff6fd"></div><div style="position:absolute;left:2765px;top:1484px;width:16px;height:16px;border-radius:50%;background:#e9e9e9"></div><div class="t" style="left:2811px;top:1477.71px;font-size:34.6px;line-height:34.6px;color:#e9e9e9;font-weight:normal;">Rectangular Snip</div>
<div class="t" style="left:879.5px;width:2000px;text-align:center;top:1627.36px;font-size:23.2px;line-height:23.2px;color:#546e7a;font-weight:normal;">© FERNBACH Financial Software</div>

</body></html>
